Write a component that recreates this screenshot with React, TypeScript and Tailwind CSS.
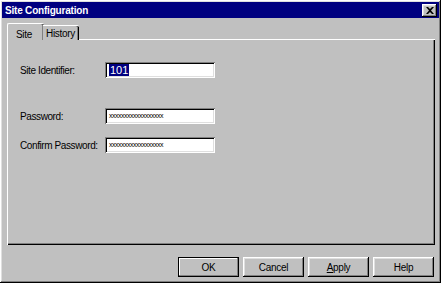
import React from "react";

const raised =
  "shadow-[inset_-1px_-1px_#000,inset_1px_1px_#fff,inset_-2px_-2px_#808080,inset_2px_2px_#dfdfdf]";
const sunken =
  "shadow-[inset_1px_1px_#808080,inset_-1px_-1px_#fff,inset_2px_2px_#000,inset_-2px_-2px_#dfdfdf]";

const Field: React.FC<{ label: string; value: string; selected?: boolean; className?: string }> = ({
  label,
  value,
  selected,
  className,
}) => (
  <div className={"flex items-center " + (className || "")}>
    <label className="w-[85px] whitespace-nowrap text-[10px] tracking-[-0.4px] text-black">{label}</label>
    <div className={"w-[110px] h-[16px] bg-white flex items-center pl-[4px] " + sunken}>
      {selected ? (
        <span className="bg-[#000080] text-white text-[11px] leading-[12px] px-[1px]">{value}</span>
      ) : (
        <span className="text-[7px] leading-[10px] text-black tracking-[-0.5px]">{value}</span>
      )}
    </div>
  </div>
);

const Button: React.FC<{ children: React.ReactNode; bold?: boolean }> = ({ children, bold }) => (
  <button
    type="button"
    className={
      "w-[61px] h-[20px] bg-[#c0c0c0] text-[10px] tracking-[-0.3px] text-black flex items-center justify-center " +
      (bold
        ? "border border-black shadow-[inset_-1px_-1px_#808080,inset_1px_1px_#fff]"
        : raised)
    }
  >
    {children}
  </button>
);

export default function App() {
  const stars = "xxxxxxxxxxxxxxxxxx";
  return (
    <div
      className={"w-[441px] h-[283px] bg-[#c0c0c0] flex flex-col p-[2px] " + raised}
      style={{ fontFamily: '"Liberation Sans", Arial, sans-serif' }}
    >
      {/* title bar */}
      <div className="h-[16px] bg-[#000080] flex items-center justify-between pl-[3px] pr-[2px]">
        <span className="text-white text-[10px] tracking-[-0.2px] font-bold">Site Configuration</span>
        <div className={"w-[15px] h-[13px] bg-[#c0c0c0] flex items-center justify-center " + raised}>
          <svg width="8" height="7" viewBox="0 0 8 7">
            <path d="M0 0h2l2 2 2-2h2L5 3.5 8 7H6L4 5 2 7H0l3-3.5z" fill="#000" />
          </svg>
        </div>
      </div>

      {/* body */}
      <div className="flex-1 flex flex-col px-[5px] pt-[5px]">
        <div className="flex items-end h-[17px] relative z-10">
          <div className="w-[37px] h-[17px] bg-[#c0c0c0] border-t border-l border-white rounded-tl-[2px] rounded-tr-[2px] shadow-[inset_-1px_0_#000,inset_-2px_0_#808080] flex items-start pt-[3px] pl-[8px] text-[10px] tracking-[-0.3px] text-black">
            Site
          </div>
          <div className="w-[36px] h-[15px] bg-[#c0c0c0] border-t border-white rounded-tr-[2px] shadow-[inset_-1px_0_#000,inset_-2px_0_#808080] flex items-center pl-[3px] text-[10px] tracking-[-0.3px] text-black -ml-[1px]">
            History
          </div>
        </div>
        <div className="w-[428px] h-[206px] border-l border-t border-white shadow-[inset_-1px_-1px_#000,inset_-2px_-2px_#808080] -mt-[1px] flex flex-col pl-[12px] pt-[22px]">
          <Field label="Site Identifier:" value="101" selected />
          <Field label="Password:" value={stars} className="mt-[30px]" />
          <Field label="Confirm Password:" value={stars} className="mt-[13px]" />
        </div>
        <div className="flex justify-end gap-[4px] mt-[12px]">
          <Button bold>OK</Button>
          <Button>Cancel</Button>
          <Button>
            <span>
              <span className="underline">A</span>pply
            </span>
          </Button>
          <Button>Help</Button>
        </div>
      </div>
    </div>
  );
}
